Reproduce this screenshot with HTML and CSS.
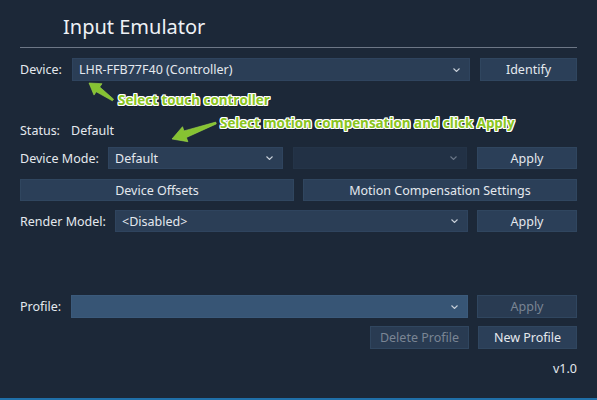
FILE: index.html
```html
<!DOCTYPE html>
<html lang="en">
  <head>
    <meta charset="UTF-8" />
    <meta name="viewport" content="width=device-width, initial-scale=1.0" />
    <title>Input Emulator</title>
    <link rel="stylesheet" href="styles.css">
  </head>
  <body>
    <div class="window">
      <div class="title">Input Emulator</div>

      <div class="row device-row">
        <span class="label device-label">Device:</span>
        <div class="combo grow">
          <span>LHR-FFB77F40 (Controller)</span>
          <svg class="chevron" width="7" height="4" viewBox="0 0 7 4"><path d="M0.5 0.5 L3.5 3.5 L6.5 0.5" /></svg>
        </div>
        <button class="btn identify">Identify</button>
      </div>

      <div class="row status-row">
        <span class="label status-label">Status:</span>
        <span>Default</span>
      </div>

      <div class="row mode-row">
        <span class="label mode-label">Device Mode:</span>
        <div class="combo mode-combo">
          <span>Default</span>
          <svg class="chevron" width="7" height="4" viewBox="0 0 7 4"><path d="M0.5 0.5 L3.5 3.5 L6.5 0.5" /></svg>
        </div>
        <div class="combo disabled mode-combo2">
          <span></span>
          <svg class="chevron" width="7" height="4" viewBox="0 0 7 4"><path d="M0.5 0.5 L3.5 3.5 L6.5 0.5" /></svg>
        </div>
        <button class="btn apply">Apply</button>
      </div>

      <div class="row offsets-row">
        <button class="btn half">Device Offsets</button>
        <button class="btn half">Motion Compensation Settings</button>
      </div>

      <div class="row render-row">
        <span class="label render-label">Render Model:</span>
        <div class="combo grow">
          <span>&lt;Disabled&gt;</span>
          <svg class="chevron" width="7" height="4" viewBox="0 0 7 4"><path d="M0.5 0.5 L3.5 3.5 L6.5 0.5" /></svg>
        </div>
        <button class="btn apply">Apply</button>
      </div>

      <div class="row profile-row">
        <span class="label profile-label">Profile:</span>
        <div class="combo grow active">
          <span></span>
          <svg class="chevron" width="7" height="4" viewBox="0 0 7 4"><path d="M0.5 0.5 L3.5 3.5 L6.5 0.5" /></svg>
        </div>
        <button class="btn apply off">Apply</button>
      </div>

      <div class="row actions-row">
        <button class="btn profile-btn off">Delete Profile</button>
        <button class="btn profile-btn">New Profile</button>
      </div>

      <div class="version">v1.0</div>

      <!-- tutorial overlay -->
      <svg class="arrows" width="597" height="400" viewBox="0 0 597 400">
        <polygon points="89,83 102,83.7 99.7,87 113.6,99.2 112.4,100.8 96.3,91.8 94,95.1" />
        <polygon points="172,139 182.5,126.7 184,130.9 215.7,122.1 216.3,123.9 186.4,137.5 187.9,141.7" />
      </svg>
      <div class="note note-touch">Select touch controller</div>
      <div class="note note-motion">Select motion compensation and click Apply</div>
    </div>
  </body>
</html>
```

FILE: styles.css
```css
body {
  margin: 0;
  background-color: #1c2838;
  font-family: "Noto Sans", "Open Sans", sans-serif;
  font-size: 12.5px;
  color: #e4e8ee;
}
.window {
  position: relative;
  height: 400px;
  box-sizing: border-box;
  padding: 0 20px;
  border-bottom: 2px solid #1f6fa8;
  overflow: hidden;
}
.title {
  font-size: 20px;
  line-height: 28px;
  padding: 13px 0 6px 43px;
  border-bottom: 1px solid #6d7786;
  color: #eef1f5;
}
.row {
  display: flex;
  align-items: center;
  height: 22px;
}
.label {
  flex: none;
}
.device-row {
  margin-top: 10px;
  height: 23px;
}
.device-label {
  width: 52px;
}
.status-row {
  margin-top: 38px;
}
.status-label {
  width: 51px;
}
.mode-row {
  margin-top: 6px;
}
.mode-label {
  width: 88px;
}
.offsets-row {
  margin-top: 10px;
  gap: 9px;
}
.render-row {
  margin-top: 9px;
}
.render-label {
  width: 95px;
}
.profile-row {
  margin-top: 63px;
  height: 23px;
}
.profile-label {
  width: 51px;
}
.actions-row {
  margin-top: 8px;
  height: 23px;
  justify-content: flex-end;
  gap: 9px;
}
.combo {
  height: 100%;
  box-sizing: border-box;
  display: flex;
  align-items: center;
  justify-content: space-between;
  padding: 0 9px 0 6px;
  background-color: #2b3e56;
  border: 1px solid #2f445e;
}
.combo.grow {
  flex: 1;
}
.mode-combo {
  width: 175px;
}
.mode-combo2 {
  width: 174px;
  margin-left: 10px;
}
.combo.disabled {
  background-color: #223145;
  border-color: #243448;
}
.combo.disabled .chevron path {
  stroke: #6b7788;
}
.combo.active {
  background-color: #375575;
  border-color: #3b5a7b;
}
.chevron path {
  fill: none;
  stroke: #c9d0d9;
  stroke-width: 1.1;
}
.btn {
  height: 100%;
  box-sizing: border-box;
  font-family: inherit;
  font-size: inherit;
  color: #e4e8ee;
  background-color: #2b3f58;
  border: 1px solid #30465f;
  padding: 0;
}
.identify {
  width: 97px;
  margin-left: 10px;
}
.apply {
  width: 100px;
  margin-left: 9px;
}
.mode-row .apply {
  margin-left: 10px;
}
.btn.off {
  color: #7a8594;
  background-color: #293b52;
}
.half {
  flex: 1;
}
.profile-btn {
  width: 99px;
}
.version {
  margin-top: 10px;
  line-height: 20px;
  text-align: right;
}
.arrows {
  position: absolute;
  left: 0;
  top: 0;
  pointer-events: none;
}
.arrows polygon {
  fill: #86c332;
  stroke: #9fd84a;
  stroke-width: 0.6;
  stroke-linejoin: round;
}
.note {
  position: absolute;
  font-family: "Open Sans", "Noto Sans", sans-serif;
  font-weight: bold;
  font-size: 13.4px;
  line-height: 16px;
  color: #8ac420;
  text-shadow: -1px 0 #fff, 1px 0 #fff, 0 -1px #fff, 0 1px #fff,
    -1px -1px #fff, 1px 1px #fff, -1px 1px #fff, 1px -1px #fff,
    1px 2px rgba(0, 0, 0, 0.35);
  white-space: nowrap;
}
.note-touch {
  left: 118px;
  top: 92px;
}
.note-motion {
  left: 220px;
  top: 115px;
}
```
